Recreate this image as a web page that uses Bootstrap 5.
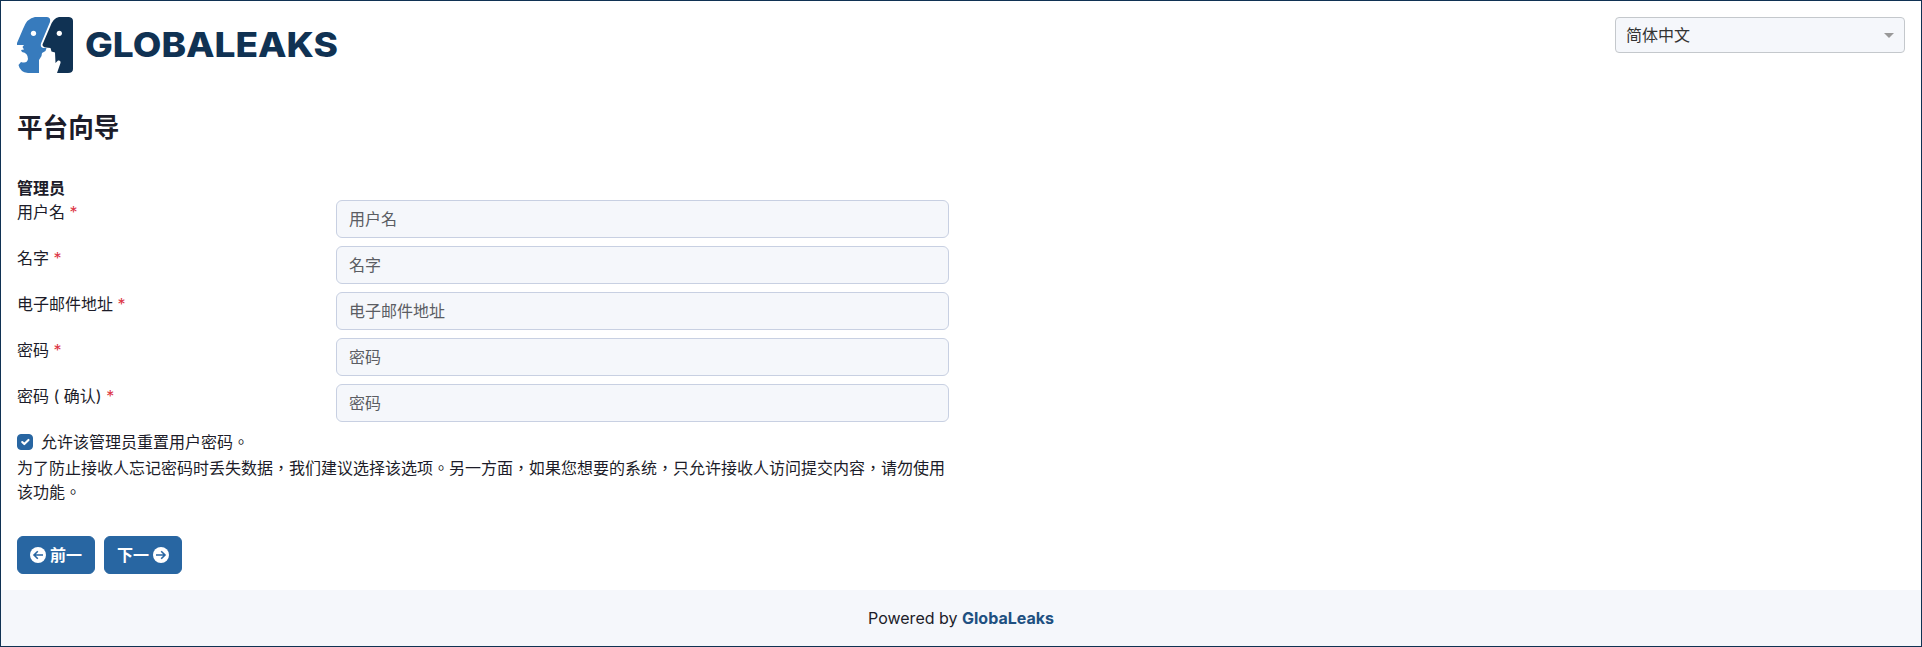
<!DOCTYPE html>
<html lang="zh-Hant">
<head>
<meta charset="utf-8">
<meta name="viewport" content="width=device-width, initial-scale=1">
<title>GlobaLeaks</title>
<link href="https://cdn.jsdelivr.net/npm/bootstrap@5.3.0/dist/css/bootstrap.min.css" rel="stylesheet">
<style>
body{font-family:Inter,"Noto Sans CJK TC",sans-serif;font-size:16px;line-height:24px;color:#1c1c29;background:#fff}
.page{min-height:100vh;border:1px solid #103253}
.lang{width:290px;height:36px;border:1px solid #c4c8cc;border-radius:4px;background:#f5f7fb;color:#333;padding:0 10px 0 10px}
.caret{border:5px solid transparent;border-top-color:#999;border-bottom:0}
.wizard-title{font-size:25.6px;line-height:31px;font-weight:700;margin:39px 0 0}
.section-title{margin-top:33px;font-weight:700}
.pane{width:932px}
.field{margin-bottom:8px}
.field-label{width:319px}
.field .form-control{height:38px;background:#f5f7fb;border-color:#c8d0e2;border-radius:6px;padding:6px 12px}
.field .form-control::placeholder{color:#5b5d63;opacity:1}
.req{color:#dc3545}
.form-check-input.tick{width:16px;height:16px;margin:0;background-color:#2866a2;border-color:#2866a2}
.hint{margin-top:2px}
.btn-wiz{--bs-btn-bg:#2866a2;--bs-btn-border-color:#2866a2;--bs-btn-color:#fff;width:78px;height:38px;font-weight:700;border-radius:6px}
.actions{gap:9px}
.foot{background:#f5f7fb}
.foot a{color:#205081;font-weight:700}
</style>
</head>
<body>
<div class="page d-flex flex-column">
<header class="d-flex justify-content-between align-items-start px-3 pt-3">
<svg width="322" height="56" viewBox="17 17 322 56" role="img" aria-label="GlobaLeaks">
<path fill="#377bbd" d="M35 17H47Q51 17.500 50 22L41 43.500Q40 47 43 48H46.500L45.500 51 42 53 41.500 56 39 60V73H28Q20 72 18.500 65L21 62Q27 64 28 59 28 53 22 52L21 50 24 49.500 22.500 47 24 45H17V43L23 29Q27 18 35 17Z"/>
<path fill="#103253" d="M59 17H69Q73 17.500 73 21V69Q73 73 68 73H57L60.500 63Q61 60 58 60.500L55.500 63 55 52.500 51.500 51.500 50.500 48 46 47.500Q42.500 47 42.500 44.500L50 27Q53 18 59 17Z"/>
<circle cx="33.500" cy="33.300" r="2.600" fill="#fff"/><circle cx="59.300" cy="33.300" r="2.600" fill="#fff"/>
<text x="85" y="57" font-family="Inter" font-weight="800" font-size="34" fill="#103253" textLength="253" lengthAdjust="spacingAndGlyphs">GLOBALEAKS</text>
</svg>
<div class="lang d-flex justify-content-between align-items-center"><span>简体中文</span><span class="caret"></span></div>
</header>
<main class="px-3 flex-grow-1">
<h1 class="wizard-title">平台向导</h1>
<div class="pane">
<div class="section-title">管理员</div>
<div class="field d-flex"><label class="field-label" for="f1">用户名 <span class="req">*</span></label><input id="f1" class="form-control flex-fill w-auto" placeholder="用户名"></div>
<div class="field d-flex"><label class="field-label" for="f2">名字 <span class="req">*</span></label><input id="f2" class="form-control flex-fill w-auto" placeholder="名字"></div>
<div class="field d-flex"><label class="field-label" for="f3">电子邮件地址 <span class="req">*</span></label><input id="f3" class="form-control flex-fill w-auto" placeholder="电子邮件地址"></div>
<div class="field d-flex"><label class="field-label" for="f4">密码 <span class="req">*</span></label><input id="f4" type="password" class="form-control flex-fill w-auto" placeholder="密码"></div>
<div class="field d-flex"><label class="field-label" for="f5">密码 ( 确认) <span class="req">*</span></label><input id="f5" type="password" class="form-control flex-fill w-auto" placeholder="密码"></div>
<div class="d-flex align-items-center gap-2"><input id="c" class="form-check-input tick" type="checkbox" checked><label for="c">允许该管理员重置用户密码。</label></div>
<div class="hint">为了防止接收人忘记密码时丢失数据，我们建议选择该选项。另一方面，如果您想要的系统，只允许接收人访问提交内容，请勿使用该功能。</div>
</div>
<div class="actions d-flex mt-4 pt-2">
<button class="btn btn-wiz p-0 d-flex align-items-center justify-content-center gap-1"><svg width="16" height="16" viewBox="0 0 16 16"><circle cx="8" cy="8" r="8" fill="#fff"/><path d="M13 8H4M7.800 4.200 4 8l3.800 3.800" fill="none" stroke="#2866a2" stroke-width="1.600"/></svg>前一</button>
<button class="btn btn-wiz p-0 d-flex align-items-center justify-content-center gap-1">下一<svg width="16" height="16" viewBox="0 0 16 16"><circle cx="8" cy="8" r="8" fill="#fff"/><path d="M3 8H12M8.200 4.200 12 8l-3.800 3.800" fill="none" stroke="#2866a2" stroke-width="1.600"/></svg></button>
</div>
</main>
<footer class="foot text-center p-3">Powered by <a class="text-decoration-none" href="#">GlobaLeaks</a></footer>
</div>
<script src="https://cdn.jsdelivr.net/npm/bootstrap@5.3.0/dist/js/bootstrap.bundle.min.js"></script>
</body>
</html>
